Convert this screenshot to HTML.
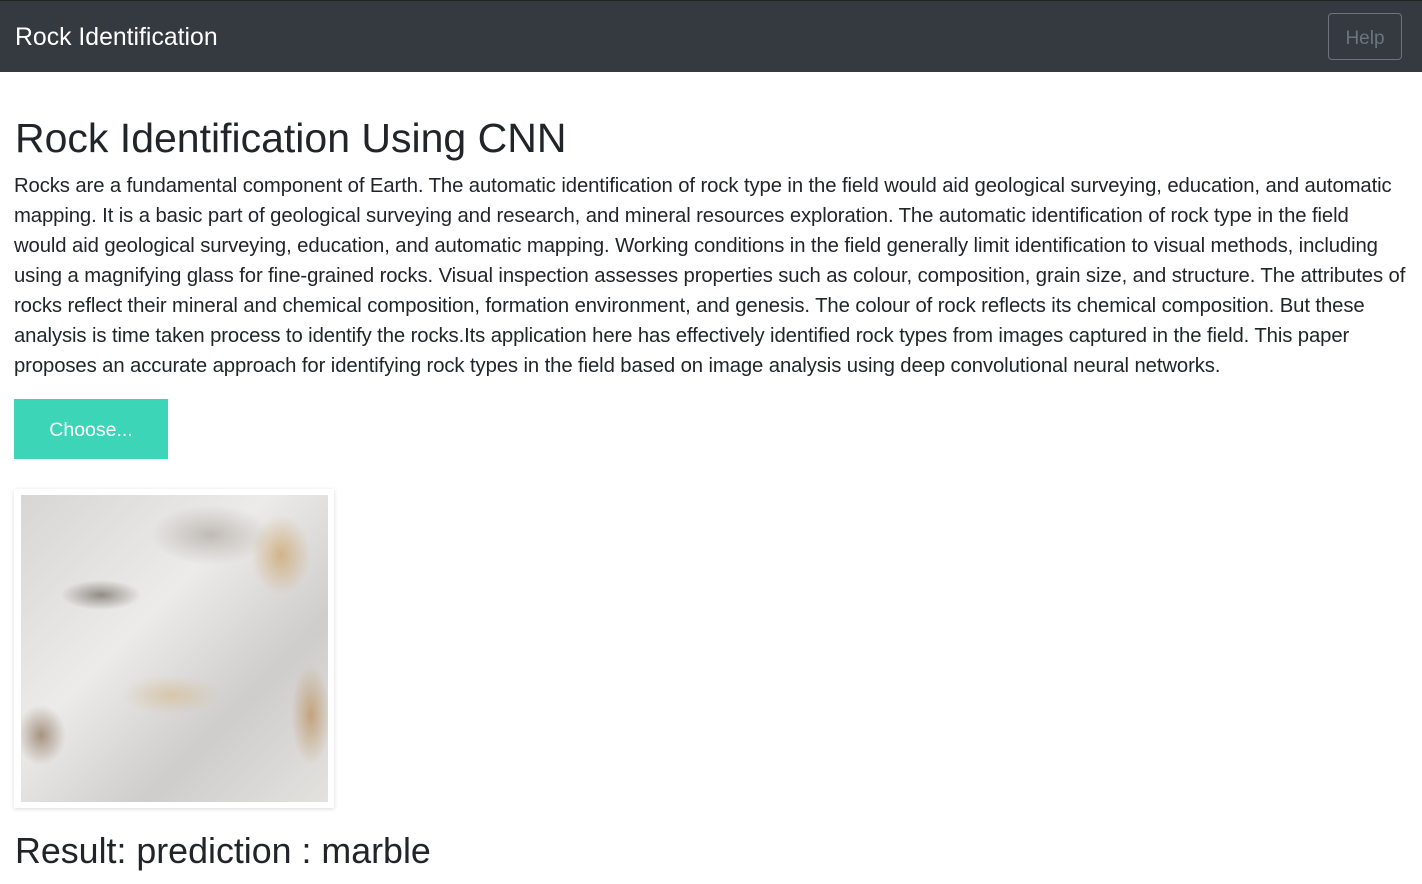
<!DOCTYPE html>
<html><head><meta charset="utf-8"><style>
body{margin:0;background:#fff;font-family:"Liberation Sans",sans-serif;color:#212529;width:1422px;height:884px;overflow:hidden}
.nav{position:absolute;left:0;top:0;width:1422px;height:71px;background:#343a40;border-top:1px solid #222}
.brand{position:absolute;left:15px;top:23px;color:#fff;font-size:24.8px}
.help{position:absolute;left:1328px;top:12px;width:74px;height:47px;border:1px solid #6c757d;border-radius:4px;color:#6c757d;font-size:19px;line-height:49px;text-align:center;box-sizing:border-box}
h1{position:absolute;left:15px;top:115px;margin:0;font-size:41px;font-weight:normal;white-space:nowrap}
.p{position:absolute;left:14px;top:171px;font-size:20.3px;line-height:30px;white-space:nowrap;letter-spacing:-0.1px}
.btn{position:absolute;left:14px;top:399px;width:154px;height:60px;background:#3cd5b8;color:#fff;font-size:19.5px;line-height:62px;text-align:center}
.frame{position:absolute;left:14px;top:489px;width:320px;height:319px;background:#fff;box-shadow:0 1px 4px rgba(0,0,0,.15)}
.img{position:absolute;left:7px;top:6px;width:307px;height:307px;background:
radial-gradient(ellipse 40px 15px at 80px 100px,rgba(90,80,70,.6),transparent),
radial-gradient(ellipse 30px 40px at 260px 60px,rgba(200,150,80,.6),transparent),
radial-gradient(ellipse 20px 50px at 290px 220px,rgba(180,130,70,.6),transparent),
radial-gradient(ellipse 25px 30px at 20px 240px,rgba(120,90,60,.6),transparent),
radial-gradient(ellipse 50px 20px at 150px 200px,rgba(210,180,130,.5),transparent),
radial-gradient(ellipse 60px 30px at 190px 40px,rgba(150,140,130,.5),transparent),
linear-gradient(135deg,#d8d6d4,#ecebea 40%,#cfcdcb 70%,#e4e2df)}
h2{position:absolute;left:15px;top:831px;margin:0;font-size:35.8px;font-weight:normal;white-space:nowrap}
</style></head><body>
<div class="nav"><div class="brand">Rock Identification</div><div class="help">Help</div></div>
<h1>Rock Identification Using CNN</h1>
<div class="p">Rocks are a fundamental component of Earth. The automatic identification of rock type in the field would aid geological surveying, education, and automatic<br>mapping. It is a basic part of geological surveying and research, and mineral resources exploration. The automatic identification of rock type in the field<br>would aid geological surveying, education, and automatic mapping. Working conditions in the field generally limit identification to visual methods, including<br>using a magnifying glass for fine-grained rocks. Visual inspection assesses properties such as colour, composition, grain size, and structure. The attributes of<br>rocks reflect their mineral and chemical composition, formation environment, and genesis. The colour of rock reflects its chemical composition. But these<br>analysis is time taken process to identify the rocks.Its application here has effectively identified rock types from images captured in the field. This paper<br>proposes an accurate approach for identifying rock types in the field based on image analysis using deep convolutional neural networks.</div>
<div class="btn">Choose...</div>
<div class="frame"><div class="img"></div></div>
<h2>Result: prediction : marble</h2>
</body></html>
